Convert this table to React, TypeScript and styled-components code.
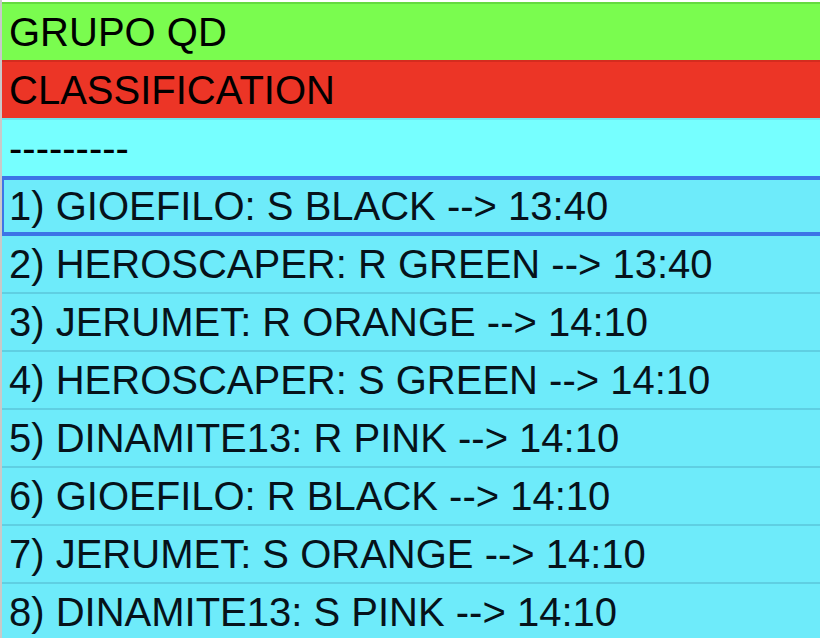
import React from 'react';
import styled, { createGlobalStyle } from 'styled-components';

const GlobalStyle = createGlobalStyle`
    html, body {
        margin: 0;
        padding: 0;
        background: #ffffff;
    }

    body {
        font-family: "Liberation Sans", Arial, sans-serif;
    }
`;

const Sheet = styled.div`
    display: flex;
    flex-direction: column;

    width: 820px;
    height: 638px;
    padding-top: 2px;
    box-sizing: border-box;
    overflow: hidden;

    border-left: 2px solid #C9C9C9;
`;

type Tone = 'green' | 'red' | 'header' | 'data';

const tones: Record<Tone, { bg: string; line: string }> = {
    green: { bg: '#7AFC4F', line: '#65DA40' },
    red: { bg: '#EC3526', line: '#D42C1F' },
    header: { bg: '#76FFFF', line: '#6CE6EE' },
    data: { bg: '#6EEBFA', line: '#5FCFE2' },
};

const Row = styled.div<{ $tone: Tone; $selected?: boolean }>`
    position: relative;
    z-index: ${p => (p.$selected ? 1 : 0)};

    display: flex;
    align-items: center;
    flex-shrink: 0;

    height: 58px;
    padding: 0 7px;
    box-sizing: border-box;

    background: ${p => tones[p.$tone].bg};
    border-top: 2px solid ${p => (p.$selected ? '#3D74E6' : tones[p.$tone].line)};
    box-shadow: ${p => (p.$selected
        ? 'inset 0 2px 0 #3D74E6, inset 2px 0 0 #3D74E6, inset 0 -2px 0 #3D74E6, 0 2px 0 #3D74E6'
        : 'none')};

    font-size: 40px;
    line-height: 46px;
    color: ${p => (p.$tone === 'data' ? '#06121A' : '#000000')};
    white-space: nowrap;
`;

const results = [
    '1) GIOEFILO: S BLACK --> 13:40',
    '2) HEROSCAPER: R GREEN --> 13:40',
    '3) JERUMET: R ORANGE --> 14:10',
    '4) HEROSCAPER: S GREEN --> 14:10',
    '5) DINAMITE13: R PINK --> 14:10',
    '6) GIOEFILO: R BLACK --> 14:10',
    '7) JERUMET: S ORANGE --> 14:10',
    '8) DINAMITE13: S PINK --> 14:10',
];

export default function App() {
    return (
        <>
            <GlobalStyle />
            <Sheet>
                <Row $tone="green">GRUPO QD</Row>
                <Row $tone="red">CLASSIFICATION</Row>
                <Row $tone="header">---------</Row>
                {results.map((line, i) => (
                    <Row key={line} $tone="data" $selected={i === 0}>
                        {line}
                    </Row>
                ))}
            </Sheet>
        </>
    );
}
